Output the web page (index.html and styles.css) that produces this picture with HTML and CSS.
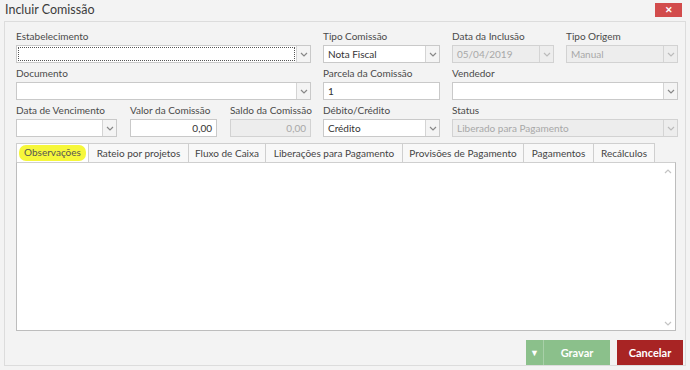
FILE: index.html
```html
<!DOCTYPE html>
<html lang="pt">
<head>
  <meta charset="UTF-8">
  <title>Incluir Comissão</title>
  <link rel="stylesheet" href="styles.css">
</head>
<body>
  <div class="titlebar">
    <span class="titulo">Incluir Comissão</span>
    <button class="fechar">&#x2715;</button>
  </div>

  <div class="painel">
    <div class="formulario">
      <div class="campo">
        <label>Estabelecimento</label>
        <div class="caixa">
          <span class="valor foco"></span>
          <span class="seta"><svg width="8" height="5" viewBox="0 0 8 5"><path d="M1 1l3 3 3-3" fill="none" stroke="#888" stroke-width="1.2"/></svg></span>
        </div>
      </div>
      <div class="campo">
        <label>Tipo Comissão</label>
        <div class="caixa">
          <span class="valor">Nota Fiscal</span>
          <span class="seta"><svg width="8" height="5" viewBox="0 0 8 5"><path d="M1 1l3 3 3-3" fill="none" stroke="#888" stroke-width="1.2"/></svg></span>
        </div>
      </div>
      <div class="campo">
        <label>Data da Inclusão</label>
        <div class="caixa desativada">
          <span class="valor">05/04/2019</span>
          <span class="seta"><svg width="8" height="5" viewBox="0 0 8 5"><path d="M1 1l3 3 3-3" fill="none" stroke="#bbb" stroke-width="1.2"/></svg></span>
        </div>
      </div>
      <div class="campo">
        <label>Tipo Origem</label>
        <div class="caixa desativada">
          <span class="valor">Manual</span>
          <span class="seta"><svg width="8" height="5" viewBox="0 0 8 5"><path d="M1 1l3 3 3-3" fill="none" stroke="#bbb" stroke-width="1.2"/></svg></span>
        </div>
      </div>

      <div class="campo">
        <label>Documento</label>
        <div class="caixa">
          <span class="valor"></span>
          <span class="seta"><svg width="8" height="5" viewBox="0 0 8 5"><path d="M1 1l3 3 3-3" fill="none" stroke="#888" stroke-width="1.2"/></svg></span>
        </div>
      </div>
      <div class="campo">
        <label>Parcela da Comissão</label>
        <div class="caixa"><span class="valor">1</span></div>
      </div>
      <div class="campo largo">
        <label>Vendedor</label>
        <div class="caixa">
          <span class="valor"></span>
          <span class="seta"><svg width="8" height="5" viewBox="0 0 8 5"><path d="M1 1l3 3 3-3" fill="none" stroke="#888" stroke-width="1.2"/></svg></span>
        </div>
      </div>

      <div class="sublinha">
        <div class="campo vencimento">
          <label>Data de Vencimento</label>
          <div class="caixa">
            <span class="valor"></span>
            <span class="seta"><svg width="8" height="5" viewBox="0 0 8 5"><path d="M1 1l3 3 3-3" fill="none" stroke="#888" stroke-width="1.2"/></svg></span>
          </div>
        </div>
        <div class="campo valorcom">
          <label>Valor da Comissão</label>
          <div class="caixa"><span class="valor direita">0,00</span></div>
        </div>
        <div class="campo saldo">
          <label>Saldo da Comissão</label>
          <div class="caixa desativada"><span class="valor direita">0,00</span></div>
        </div>
      </div>
      <div class="campo">
        <label>Débito/Crédito</label>
        <div class="caixa">
          <span class="valor">Crédito</span>
          <span class="seta"><svg width="8" height="5" viewBox="0 0 8 5"><path d="M1 1l3 3 3-3" fill="none" stroke="#888" stroke-width="1.2"/></svg></span>
        </div>
      </div>
      <div class="campo largo">
        <label>Status</label>
        <div class="caixa desativada">
          <span class="valor">Liberado para Pagamento</span>
          <span class="seta"><svg width="8" height="5" viewBox="0 0 8 5"><path d="M1 1l3 3 3-3" fill="none" stroke="#bbb" stroke-width="1.2"/></svg></span>
        </div>
      </div>
    </div>

    <div class="abas">
      <div class="aba ativa"><span class="marca">Observações</span></div>
      <div class="aba rateio">Rateio por projetos</div>
      <div class="aba fluxo">Fluxo de Caixa</div>
      <div class="aba liberacoes">Liberações para Pagamento</div>
      <div class="aba provisoes">Provisões de Pagamento</div>
      <div class="aba pagamentos">Pagamentos</div>
      <div class="aba recalculos">Recálculos</div>
    </div>

    <div class="conteudo">
      <div class="texto"></div>
      <div class="rolagem">
        <svg width="8" height="5" viewBox="0 0 8 5"><path d="M1 4l3-3 3 3" fill="none" stroke="#c4c4c4" stroke-width="1.2"/></svg>
        <svg width="8" height="5" viewBox="0 0 8 5"><path d="M1 1l3 3 3-3" fill="none" stroke="#c4c4c4" stroke-width="1.2"/></svg>
      </div>
    </div>

    <div class="rodape">
      <div class="gravar">
        <span class="opcoes">&#9660;</span>
        <span class="rotulo">Gravar</span>
      </div>
      <button class="cancelar">Cancelar</button>
    </div>
  </div>
</body>
</html>
```

FILE: styles.css
```css
* {
  box-sizing: border-box;
  font-family: Lato, 'Noto Sans', sans-serif;
}

body {
  margin: 0;
  width: 690px;
  height: 370px;
  background: #f3f3f3;
  color: #444;
  font-size: 10px;
}

.titlebar {
  height: 21px;
  display: flex;
  align-items: flex-start;
  justify-content: space-between;
  padding: 2px 8px 0 5px;
}

.titulo {
  font-size: 12.5px;
  color: #3c3c3c;
  line-height: 16px;
}

.fechar {
  width: 27px;
  height: 14px;
  margin-top: 1px;
  padding: 0;
  border: none;
  background: #d24c4c;
  color: #fff;
  font-size: 9px;
  font-weight: bold;
  line-height: 14px;
}

.painel {
  margin: 0 4px;
  height: 345px;
  border: 1px solid #dcdcdc;
  padding: 8px 8px 0 11px;
}

/* grade do formulário */
.formulario {
  display: grid;
  grid-template-columns: 295px 117px 102px 112px;
  column-gap: 12px;
  row-gap: 4px;
}

.campo {
  display: flex;
  flex-direction: column;
}

.campo label {
  height: 15px;
  line-height: 13px;
  color: #4a4a4a;
  white-space: nowrap;
}

.largo {
  grid-column: span 2;
}

.sublinha {
  display: flex;
  gap: 13px;
}

.vencimento { width: 101px; }
.valorcom { width: 87px; }
.saldo { width: 81px; }

.caixa {
  height: 18px;
  display: flex;
  background: #fff;
  border: 1px solid #c9c9c9;
}

.valor {
  flex: 1;
  padding: 0 4px;
  line-height: 16px;
  color: #333;
  white-space: nowrap;
  overflow: hidden;
}

.valor.direita {
  text-align: right;
}

.valor.foco {
  margin: 1px;
  border: 1px dotted #555;
}

.seta {
  width: 14px;
  display: flex;
  align-items: center;
  justify-content: center;
  border-left: 1px solid #d4d4d4;
  background: #f4f4f4;
}

.desativada {
  background: #ededed;
  border-color: #d2d2d2;
}

.desativada .valor {
  color: #a8a8a8;
}

.desativada .seta {
  background: #ededed;
}

/* abas */
.abas {
  display: flex;
  margin-top: 6px;
  height: 19px;
}

.aba {
  line-height: 18px;
  text-align: center;
  border: 1px solid #cfcfcf;
  border-left: none;
  border-bottom: none;
  background: #f8f8f8;
  color: #444;
  white-space: nowrap;
}

.aba.ativa {
  width: 73px;
  border-left: 1px solid #cfcfcf;
  background: #fff;
  padding: 1px 2px;
}

.rateio { width: 100px; }
.fluxo { width: 77px; }
.liberacoes { width: 137px; }
.provisoes { width: 121px; }
.pagamentos { width: 70px; }
.recalculos { width: 61px; }

.marca {
  display: block;
  height: 16px;
  line-height: 15px;
  text-align: center;
  background: #f6f73a;
  border-radius: 7px;
  color: #555;
}

.conteudo {
  height: 169px;
  display: flex;
  background: #fff;
  border: 1px solid #bdbdbd;
  border-top-color: #cfcfcf;
  margin-right: 1px;
}

.texto {
  flex: 1;
}

.rolagem {
  width: 14px;
  display: flex;
  flex-direction: column;
  justify-content: space-between;
  align-items: center;
  padding: 6px 0 4px;
}

/* botões */
.rodape {
  display: flex;
  justify-content: flex-end;
  gap: 7px;
  margin-top: 9px;
  margin-right: -6px;
}

.gravar {
  width: 84px;
  height: 25px;
  display: flex;
  background: #8bc08b;
  color: #fff;
  font-weight: bold;
  font-size: 11px;
}

.opcoes {
  width: 18px;
  line-height: 25px;
  text-align: center;
  font-size: 9px;
  border-right: 1px solid #a8d0a8;
}

.rotulo {
  flex: 1;
  text-align: center;
  line-height: 25px;
}

.cancelar {
  width: 66px;
  height: 25px;
  padding: 0;
  border: none;
  background: #a82424;
  color: #fff;
  font-weight: bold;
  font-size: 11px;
}
```
